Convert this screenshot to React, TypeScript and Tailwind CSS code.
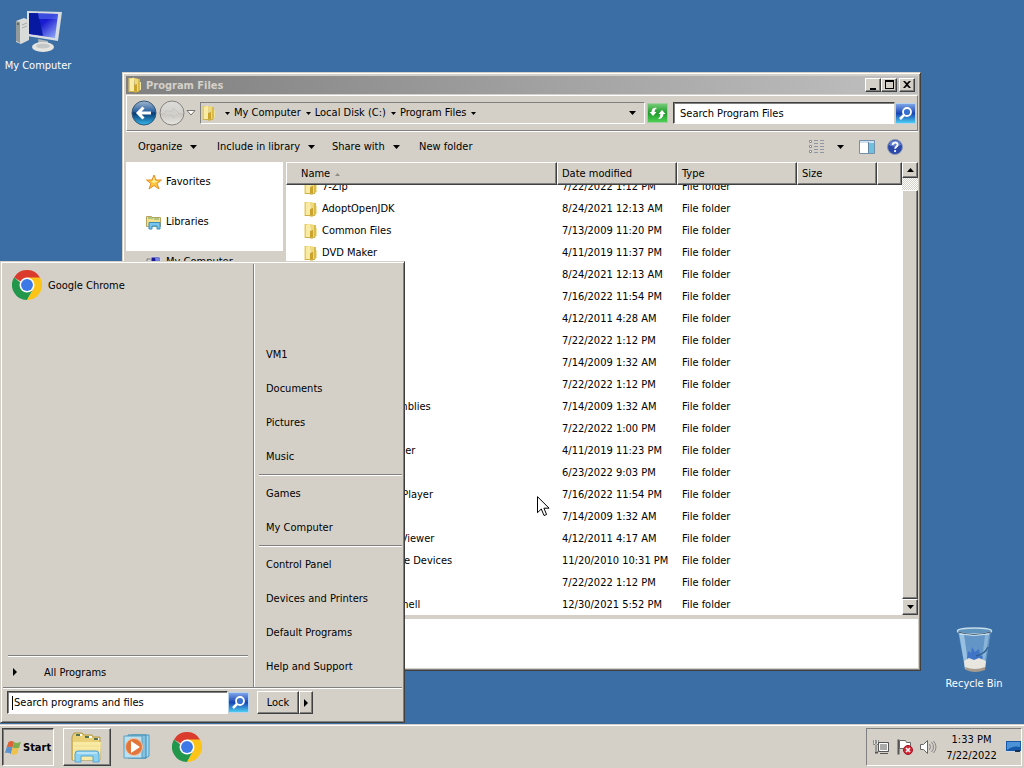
import { useEffect, useRef, useState } from "react";
import type { ReactNode } from "react";

type FileRow = { name: string; date: string };

const files: FileRow[] = [
  { name: "7-Zip", date: "7/22/2022 1:12 PM" },
  { name: "AdoptOpenJDK", date: "8/24/2021 12:13 AM" },
  { name: "Common Files", date: "7/13/2009 11:20 PM" },
  { name: "DVD Maker", date: "4/11/2019 11:37 PM" },
  { name: "Google", date: "8/24/2021 12:13 AM" },
  { name: "Intel", date: "7/16/2022 11:54 PM" },
  { name: "Java", date: "4/12/2011 4:28 AM" },
  { name: "Microsoft", date: "7/22/2022 1:12 PM" },
  { name: "MSBuild", date: "7/14/2009 1:32 AM" },
  { name: "Notepad++", date: "7/22/2022 1:12 PM" },
  { name: "Reference Assemblies", date: "7/14/2009 1:32 AM" },
  { name: "Tools", date: "7/22/2022 1:00 PM" },
  { name: "Windows Defender", date: "4/11/2019 11:23 PM" },
  { name: "Windows Mail", date: "6/23/2022 9:03 PM" },
  { name: "Windows Media Player", date: "7/16/2022 11:54 PM" },
  { name: "Windows NT", date: "7/14/2009 1:32 AM" },
  { name: "Windows Photo Viewer", date: "4/12/2011 4:17 AM" },
  { name: "Windows Portable Devices", date: "11/20/2010 10:31 PM" },
  { name: "WinRAR", date: "7/22/2022 1:12 PM" },
  { name: "WindowsPowerShell", date: "12/30/2021 5:52 PM" },
];

const menuGroups = [
  ["VM1", "Documents", "Pictures", "Music"],
  ["Games", "My Computer"],
  ["Control Panel", "Devices and Printers", "Default Programs", "Help and Support"],
];

const raised =
  "border border-t-white border-l-white border-r-[#404040] border-b-[#404040] bg-[#d4d0c8] shadow-[inset_-1px_-1px_0_#808080]";
const sunken = "border border-t-[#808080] border-l-[#808080] border-r-white border-b-white";

export default function App() {
  return (
    <div className="flex h-screen flex-col overflow-hidden bg-[#3a6ea5] font-['DejaVu_Sans_Condensed','DejaVu_Sans',sans-serif] text-[11px] leading-[14px] text-black select-none">
      <main className="relative min-h-0 flex-1">
        <DesktopIcon label="My Computer" className="top-2 left-0">
          <ComputerIcon />
        </DesktopIcon>
        <DesktopIcon label="Recycle Bin" className="right-3 bottom-[33px]">
          <BinIcon />
        </DesktopIcon>
        <ExplorerWindow />
        <StartMenu />
        <Cursor />
      </main>
      <Taskbar />
    </div>
  );
}

function DesktopIcon({ label, className, children }: { label: string; className: string; children: ReactNode }) {
  return (
    <button className={`absolute flex w-[76px] flex-col items-center gap-[3px] text-white ${className}`}>
      {children}
      <span className="whitespace-nowrap">{label}</span>
    </button>
  );
}

/* Explorer */

function ExplorerWindow() {
  return (
    <section className="absolute top-[72px] left-[122px] flex h-[599px] w-[799px] flex-col border border-t-[#d4d0c8] border-l-[#d4d0c8] border-r-[#404040] border-b-[#404040] bg-[#d4d0c8] pt-[3px] pr-[2px] pb-[2px] pl-[3px] shadow-[inset_1px_1px_0_#fff,inset_-1px_-1px_0_#808080]">
      <header className="flex h-[18px] shrink-0 items-center bg-linear-to-r from-[#808080] to-[#c0c0c0] pr-[3px] pl-px">
        <FolderIcon />
        <h1 className="ml-[3px] flex-1 pt-px font-bold text-[#d4d0c8]">Program Files</h1>
        <CaptionButton label="Minimize">
          <path d="M3 9h6v2H3z" />
        </CaptionButton>
        <CaptionButton label="Maximize">
          <path d="M2 1h9v9H2zM3 3v6h7V3z" fillRule="evenodd" />
        </CaptionButton>
        <span className="w-[2px]" />
        <CaptionButton label="Close">
          <path d="M2 2h2l2 2 2-2h2L7 5.500l3 3.500H8L6 7 4 9H2l3-3.500z" />
        </CaptionButton>
      </header>

      <AddressRow />

      <div className="flex h-[31px] shrink-0 items-center pr-[15px] pl-3">
        <button className="flex w-[79px] items-center gap-2">
          Organize <DownArrow />
        </button>
        <button className="flex w-[115px] items-center gap-2 whitespace-nowrap">
          Include in library <DownArrow />
        </button>
        <button className="flex w-[87px] items-center gap-2 whitespace-nowrap">
          Share with <DownArrow />
        </button>
        <button>New folder</button>
        <span className="flex-1" />
        <button aria-label="Change your view" className="flex items-center gap-3">
          <svg width="16" height="13" viewBox="0 0 16 13">
            <path d="M.5.500h2v2h-2zM.5 5.500h2v2h-2zM.5 10.500h2v2h-2z" fill="#fff" stroke="#8c8c8c" />
            <path d="M5 .5h4m2 0h4M5 3.500h4m2 0h4M5 6.500h4m2 0h4M5 9.500h4m2 0h4M5 12.500h4m2 0h4" stroke="#8f97a3" />
          </svg>
          <DownArrow />
        </button>
        <button aria-label="Show the preview pane" className="ml-[15px]">
          <svg width="16" height="14" viewBox="0 0 16 14">
            <path d="M.5.500h15v13H.5z" fill="#fff" stroke="#7590ad" />
            <path d="M1 1h14v2H1z" fill="#cfe0ef" />
            <path d="M10 3h5v10h-5z" fill="#6fc0dc" />
            <path d="M9.500 2v11" stroke="#6484a8" />
          </svg>
        </button>
        <button aria-label="Get help" className="ml-3">
          <svg width="16" height="16" viewBox="0 0 16 16">
            <circle cx="8" cy="8" r="7.500" fill="#2b48a8" stroke="#8b99b8" />
            <path d="M2 6a6.300 6.300 0 0 1 12 0q-6 3-12 0z" fill="#8fa8ea" opacity=".6" />
            <path d="M5.600 6c.1-3.300 5-3.200 5-.3 0 2-2.500 2-2.500 4" fill="none" stroke="#fff" strokeWidth="1.800" />
            <circle cx="8.100" cy="12.100" r="1.100" fill="#fff" />
          </svg>
        </button>
      </div>

      <div className="flex min-h-0 flex-1">
        <nav className="w-[157px] shrink-0 overflow-hidden bg-white">
          <a href="#favorites" className="flex h-10 items-center gap-1 pl-5">
            <StarIcon /> Favorites
          </a>
          <a href="#libraries" className="flex h-10 items-center gap-1 pl-5">
            <LibraryIcon /> Libraries
          </a>
          <a href="#computer" className="mt-[9px] flex h-[22px] items-center gap-1 bg-[#d4d0c8] pl-5">
            <MiniComputerIcon /> My Computer
          </a>
        </nav>
        <div className="ml-[3px] flex min-w-0 flex-1">
          <FileTable />
          <Scrollbar />
        </div>
      </div>

      <footer className="mt-1 h-[49px] shrink-0 bg-white" />
    </section>
  );
}

function CaptionButton({ label, children }: { label: string; children: ReactNode }) {
  return (
    <button aria-label={label} className={`flex h-[14px] w-4 items-center justify-center ${raised}`}>
      <svg width="12" height="12" viewBox="0 0 12 12" className="shrink-0">
        {children}
      </svg>
    </button>
  );
}

function AddressRow() {
  const [query, setQuery] = useState("");

  return (
    <div className="mt-px flex h-[36px] shrink-0 items-center border border-t-white border-l-white border-r-[#808080] border-b-[#808080] pr-px pl-1 shadow-[0_1px_0_#fff]">
      <button aria-label="Back">
        <svg width="26" height="26" viewBox="0 0 26 26">
          <defs>
            <linearGradient id="back" x2="0" y2="1">
              <stop offset="0" stopColor="#a3b8cf" />
              <stop offset=".45" stopColor="#28609e" />
              <stop offset=".5" stopColor="#073770" />
              <stop offset="1" stopColor="#35b8ee" />
            </linearGradient>
          </defs>
          <circle cx="13" cy="13" r="12" fill="url(#back)" stroke="#355777" />
          <path d="M7 13h13M12.500 7.500L7 13l5.500 5.500" fill="none" stroke="#fff" strokeWidth="3" />
        </svg>
      </button>
      <button aria-label="Forward" className="ml-[2px]">
        <svg width="26" height="26" viewBox="0 0 26 26">
          <defs>
            <linearGradient id="fwd" x2="0" y2="1">
              <stop offset="0" stopColor="#dedcd8" />
              <stop offset=".48" stopColor="#d4d2ce" />
              <stop offset=".5" stopColor="#c6c3be" />
              <stop offset="1" stopColor="#e9e7e2" />
            </linearGradient>
          </defs>
          <circle cx="13" cy="13" r="12" fill="url(#fwd)" stroke="#85837e" />
          <path d="M20 13l-6-5v3H6v4h8v3z" fill="#d2d0cb" stroke="#c5c3be" strokeWidth=".7" />
        </svg>
      </button>
      <button aria-label="Recent pages" className="ml-px">
        <svg width="10" height="6" viewBox="0 0 10 6">
          <path d="M1 .5h8L5 5z" fill="#fff" stroke="#77756f" />
        </svg>
      </button>
      <div className={`ml-1 flex h-[22px] min-w-0 flex-1 items-center gap-1 ${sunken}`}>
        <FolderIcon />
        <span className="ml-1">
          <DownArrow small />
        </span>
        <Crumb label="My Computer" />
        <Crumb label="Local Disk (C:)" />
        <Crumb label="Program Files" />
        <span className="flex-1" />
        <button aria-label="Previous locations" className="pr-2">
          <DownArrow />
        </button>
      </div>
      <button aria-label="Refresh" className="ml-[2px]">
        <svg width="21" height="20" viewBox="0 0 21 20">
          <defs>
            <linearGradient id="refresh" x2="0" y2="1">
              <stop offset="0" stopColor="#79ce7a" />
              <stop offset=".5" stopColor="#1f9a2b" />
              <stop offset="1" stopColor="#4fd255" />
            </linearGradient>
          </defs>
          <path d="M.5.500h20v19H.5z" fill="url(#refresh)" stroke="#9fd0a0" />
          <path d="M2.500 9L6 13l3.500-4H7.500q0-3 2.500-4Q5 4 4.500 9z" fill="#fff" />
          <path d="M18.500 11L15 7l-3.500 4h2q0 3-2.500 5 5 0 5.500-5z" fill="#fff" />
        </svg>
      </button>
      <input
        type="search"
        aria-label="Search Program Files"
        placeholder="Search Program Files"
        value={query}
        onChange={(e) => setQuery(e.target.value)}
        className="ml-[5px] h-[22px] w-[222px] border border-t-[#404040] border-l-[#404040] border-r-[#d4d0c8] border-b-white bg-white pl-[6px] shadow-[inset_1px_1px_0_#808080] outline-none placeholder:text-black"
      />
      <button aria-label="Search">
        <SearchIcon />
      </button>
    </div>
  );
}

function Crumb({ label }: { label: string }) {
  return (
    <button className="flex shrink-0 items-center gap-[5px] whitespace-nowrap">
      {label}
      <DownArrow small />
    </button>
  );
}

function DownArrow({ small }: { small?: boolean }) {
  return (
    <svg width={small ? 5 : 7} height={small ? 3 : 4} viewBox="0 0 8 4" preserveAspectRatio="none" className="shrink-0">
      <path d="M0 0h8L4 4z" />
    </svg>
  );
}

function FileTable() {
  const box = useRef<HTMLDivElement>(null);

  useEffect(() => {
    if (box.current) box.current.scrollTop = 9;
  }, []);

  const th =
    "h-[23px] border border-t-white border-l-white border-r-[#404040] border-b-[#404040] bg-[#d4d0c8] pt-px pl-1 text-left font-normal shadow-[inset_-1px_-1px_0_#808080]";

  return (
    <div ref={box} className="min-w-0 flex-1 overflow-hidden bg-white">
      <table className="w-full table-fixed border-separate border-spacing-0">
        <thead className="sticky top-0 z-10">
          <tr>
            <th className={th}>
              <span className="ml-[10px] flex items-center gap-[5px]">
                Name
                <svg width="5" height="3" viewBox="0 0 5 3">
                  <path d="M0 3h5L2.500 0z" fill="#8f8c86" />
                </svg>
              </span>
            </th>
            <th className={`w-[120px] ${th}`}>Date modified</th>
            <th className={`w-[120px] ${th}`}>Type</th>
            <th className={`w-[80px] ${th}`}>Size</th>
            <th className={`w-[25px] ${th}`} />
          </tr>
        </thead>
        <tbody>
          {files.map((f) => (
            <tr key={f.name} className="h-[22px]">
              <td className="p-0">
                <span className="flex items-center gap-[3px] pl-[17px] whitespace-nowrap">
                  <FolderIcon />
                  {f.name}
                </span>
              </td>
              <td className="p-0 pl-[5px] whitespace-nowrap">{f.date}</td>
              <td className="p-0 pl-[5px]">File folder</td>
              <td />
              <td />
            </tr>
          ))}
        </tbody>
      </table>
    </div>
  );
}

function Scrollbar() {
  return (
    <div className="flex w-4 shrink-0 flex-col bg-[#e9e7e3]">
      <button aria-label="Scroll up" className={`flex h-4 items-center justify-center ${raised}`}>
        <svg width="7" height="4" viewBox="0 0 7 4">
          <path d="M0 4h7L3.500 0z" />
        </svg>
      </button>
      <div className="h-3 bg-[conic-gradient(#d4d0c8_25%,#fff_0_50%,#d4d0c8_0_75%,#fff_0)] bg-size-[2px_2px]" />
      <div className={`flex-1 ${raised}`} />
      <button aria-label="Scroll down" className={`flex h-4 items-center justify-center ${raised}`}>
        <DownArrow />
      </button>
    </div>
  );
}

/* Start menu */

function StartMenu() {
  const [query, setQuery] = useState("");

  return (
    <aside className="absolute bottom-px left-0 flex h-[462px] w-[405px] flex-col border border-t-[#d4d0c8] border-l-[#d4d0c8] border-r-[#404040] border-b-[#404040] bg-[#d4d0c8] p-[2px] shadow-[inset_1px_1px_0_#fff,inset_-1px_-1px_0_#808080]">
      <div className="flex min-h-0 flex-1 border-b border-[#808080]">
        <div className="flex w-[251px] flex-col border-r border-[#808080] px-[5px]">
          <button className="mt-1 flex h-[34px] items-center gap-[6px] pl-1">
            <ChromeIcon />
            <span className="pt-px">Google Chrome</span>
          </button>
          <span className="flex-1" />
          <hr className="border-t border-b border-t-[#808080] border-b-white" />
          <button className="flex h-[30px] items-center gap-[27px] pl-[5px]">
            <RightArrow /> <span className="pt-px">All Programs</span>
          </button>
        </div>
        <div className="flex flex-1 flex-col justify-end border-l border-white pb-[3px] pl-1">
          {menuGroups.map((group, i) => (
            <div key={i}>
              {i > 0 && <hr className="mb-px border-t border-b border-t-[#808080] border-b-white" />}
              {group.map((item) => (
                <button key={item} className="flex h-[34px] w-full items-center pl-[7px]">
                  {item}
                </button>
              ))}
            </div>
          ))}
        </div>
      </div>
      <div className="flex h-8 shrink-0 items-start border-t border-white pt-[2px] pl-1">
        <label className="flex h-[23px] w-[221px] items-center border border-t-[#404040] border-l-[#404040] border-r-white border-b-white bg-white pt-px pl-1 shadow-[inset_1px_1px_0_#808080]">
          <span className="h-[14px] w-px bg-black" />
          <input
            aria-label="Search programs and files"
            placeholder="Search programs and files"
            value={query}
            onChange={(e) => setQuery(e.target.value)}
            className="ml-px min-w-0 flex-1 outline-none placeholder:text-black"
          />
        </label>
        <button aria-label="Search" className="pt-px">
          <SearchIcon />
        </button>
        <button className={`ml-2 h-[23px] w-[42px] ${raised}`}>Lock</button>
        <button aria-label="Shut down options" className={`flex h-[23px] w-[14px] items-center justify-center ${raised}`}>
          <RightArrow />
        </button>
      </div>
    </aside>
  );
}

function RightArrow() {
  return (
    <svg width="4" height="8" viewBox="0 0 4 8" className="shrink-0">
      <path d="M0 0v8l4-4z" />
    </svg>
  );
}

/* Taskbar */

function Taskbar() {
  return (
    <footer className="flex h-[44px] shrink-0 items-center border-t border-[#d4d0c8] bg-[#d4d0c8] px-[2px] pt-px shadow-[inset_0_1px_0_#fff]">
      <button className="flex h-[38px] w-[52px] items-center gap-px border border-t-[#404040] border-l-[#404040] border-r-white border-b-white pt-px pl-[2px] font-bold shadow-[inset_1px_1px_0_#808080]">
        <WindowsFlag />
        Start
      </button>
      <button aria-label="Windows Explorer" className={`ml-[9px] flex h-[38px] w-[48px] items-center justify-center ${raised}`}>
        <ExplorerIcon />
      </button>
      <button aria-label="Windows Media Player" className="ml-3 flex w-7 justify-center">
        <MediaIcon />
      </button>
      <button aria-label="Google Chrome" className="ml-[21px]">
        <ChromeIcon />
      </button>
      <span className="flex-1" />
      <div className={`flex h-[38px] w-[156px] items-center pl-[6px] ${sunken}`}>
        <button aria-label="Network">
          <NetworkIcon />
        </button>
        <button aria-label="Action Center" className="ml-2">
          <FlagIcon />
        </button>
        <button aria-label="Volume" className="ml-[7px]">
          <VolumeIcon />
        </button>
        <time className="w-[74px] pt-px text-center leading-4">
          1:33 PM
          <br />
          7/22/2022
        </time>
        <button aria-label="Show desktop">
          <svg width="15" height="14" viewBox="0 0 15 14">
            <path d="M0 1h15v11H0z" fill="#1559a8" />
            <path d="M1 2h13v5Q7 5 1 10z" fill="#4b93d6" />
            <path d="M0 11h15v1H0z" fill="#cfdbe8" />
            <path d="M9 10h5v2H9z" fill="#173252" />
          </svg>
        </button>
      </div>
    </footer>
  );
}

/* Icons */

function FolderIcon() {
  return (
    <svg width="16" height="16" viewBox="0 0 16 16" className="shrink-0">
      <path d="M1.500 1H7v13l-5.500 1z" fill="#e6cc60" />
      <path d="M7 1l5 1v12l-4 1z" fill="#efd977" />
      <path d="M3 2l4-1.500V15l-4-1z" fill="#f9eba4" />
      <path d="M7 8l3-1v8.500H7z" fill="#c9a32c" />
      <path d="M11 2h2v11.500l-2 .5z" fill="#d9ba4c" />
      <path d="M13.500 5v8" stroke="#f0e4a2" />
      <path d="M2 14.500h10" stroke="#cdb04a" />
    </svg>
  );
}

function SearchIcon() {
  return (
    <svg width="21" height="21" viewBox="0 0 21 21">
      <defs>
        <linearGradient id="glass" x2="0" y2="1">
          <stop offset="0" stopColor="#83a8ea" />
          <stop offset=".5" stopColor="#1745b5" />
          <stop offset="1" stopColor="#4ed4f2" />
        </linearGradient>
      </defs>
      <rect x=".5" y=".5" width="20" height="20" rx="1" fill="url(#glass)" stroke="#b5d3ee" />
      <circle cx="12" cy="9" r="4" fill="#3971d0" stroke="#fff" strokeWidth="1.800" />
      <path d="M9 12l-4 4" stroke="#fff" strokeWidth="2.500" />
    </svg>
  );
}

function StarIcon() {
  return (
    <svg width="16" height="16" viewBox="0 0 16 16">
      <path d="M8 1l2 5h5.500L11 9.500l2 5.500-5-3.500L3 15l2-5.500L.5 6H6z" fill="#fcc63e" stroke="#e58d25" />
      <path d="M8 3l1 4 3 .5-4 1.500-3-1.500L7 7z" fill="#fff2a0" />
    </svg>
  );
}

function LibraryIcon() {
  return (
    <svg width="16" height="16" viewBox="0 0 16 16">
      <path d="M.5 2.500h5l1 1h8v9H.5z" fill="#f3df8c" stroke="#b9a45c" />
      <path d="M2 4h5m1 1h5" stroke="#6ea66f" />
      <path d="M3 15V8.500h11V15h-3v-3H6v3z" fill="#79c5ec" stroke="#348fc0" />
    </svg>
  );
}

function MiniComputerIcon() {
  return (
    <svg width="16" height="16" viewBox="0 0 16 16">
      <path d="M1 5h4v8H1z" fill="#dedede" stroke="#777" />
      <path d="M5 3h9v8H5z" fill="#181898" stroke="#d8d8e8" />
      <path d="M9 4h4v6h-3z" fill="#7483e0" />
      <path d="M6 14q3-3 7 0z" fill="#999" />
    </svg>
  );
}

function ComputerIcon() {
  return (
    <svg width="48" height="48" viewBox="0 0 48 48">
      <defs>
        <linearGradient id="screen" x2="1" y2="1">
          <stop offset="0" stopColor="#1524d0" />
          <stop offset=".45" stopColor="#1a1ad0" />
          <stop offset="1" stopColor="#9bb7fb" />
        </linearGradient>
      </defs>
      <path d="M2 13l8-3 5 2v20l-8 4-5-2z" fill="#d9dbd8" />
      <path d="M2 13l4 1v21l-4-2z" fill="#94999b" />
      <path d="M8 17l5-2M8 20l5-2" stroke="#aaa" />
      <circle cx="4" cy="16" r="1" fill="#49604a" />
      <path d="M24 31l10 2-1 7h-8z" fill="#aeb5b9" />
      <ellipse cx="29" cy="39" rx="11" ry="5" fill="#e6e5e0" />
      <ellipse cx="29" cy="38" rx="7" ry="2.500" fill="#c4c7c7" />
      <path d="M13 3l35 1-4 29-31-5z" fill="#d7dce0" />
      <path d="M15 5l29 1-3 24-26-4z" fill="url(#screen)" />
      <path d="M15 5l9 .3 5 22.500-14-2z" fill="#0719a0" />
      <path d="M24 5.300l20 .7-1 5-18 0z" fill="#5d79ed" opacity=".5" />
    </svg>
  );
}

function BinIcon() {
  return (
    <svg width="48" height="48" viewBox="0 0 48 48">
      <path d="M8 5h33l-6 38q-10 5-20 0z" fill="#7fb0dc" opacity=".6" />
      <path d="M9 7l6 35q2 2 4 2L14 8z" fill="#bcdcf2" opacity=".6" />
      <path d="M35 9l4-1-5 34-3 1z" fill="#c3e0f3" opacity=".4" />
      <path d="M17 32l1-7 3 2 1-6 3 5 4-3 1 6 3 2-2 5H18z" fill="#2c62c8" opacity=".65" />
      <path d="M14 35l5-3 5 2 5-2 7 3-1 8q-10 4-20 0z" fill="#e8e6df" />
      <path d="M15 41q10 4 20 0v3q-10 4-19 0z" fill="#a69b8e" />
      <path d="M38 21q-3 7-12 9" fill="none" stroke="#30618f" strokeWidth="1.500" />
      <ellipse cx="24.500" cy="5" rx="17" ry="3" fill="#5e93bd" stroke="#c4dbe8" strokeWidth="1.500" />
      <path d="M8 6q16 5 33 0" fill="none" stroke="#39566f" />
      <path d="M10 8q14 3 29 0" fill="none" stroke="#d4e6ef" />
    </svg>
  );
}

function ChromeIcon() {
  return (
    <svg width="30" height="30" viewBox="0 0 48 48" className="shrink-0">
      <path d="M24 24L3.200 12A24 24 0 0 1 44.800 12z" fill="#db3b2c" />
      <path d="M24 24h-6L3.200 12A24 24 0 0 0 24 48l10-18z" fill="#22964a" />
      <path d="M24 12h20.800A24 24 0 0 1 24 48l10.400-18z" fill="#fbc417" />
      <circle cx="24" cy="24" r="12" fill="#fff" />
      <circle cx="24" cy="24" r="9.500" fill="#3c78e6" />
    </svg>
  );
}

function WindowsFlag() {
  return (
    <svg width="17" height="16" viewBox="0 0 17 16" className="shrink-0">
      <path d="M3.500 2q3-2 5.500 0L7.500 7.500Q5 6 1.500 7.500z" fill="#dd6238" />
      <path d="M9 2q3.500 2 7-.5l-2 6.500q-3.500 1-6.500-.5z" fill="#7fae4c" />
      <path d="M1.500 7.500q3-1.500 6 0L6 14Q3 12 0 13z" fill="#5b92cc" />
      <path d="M7.500 7.500q3.500 1.500 6.500.5l-2 6q-3 1.500-6 0z" fill="#efc24c" />
    </svg>
  );
}

function ExplorerIcon() {
  return (
    <svg width="32" height="32" viewBox="0 0 32 32">
      <path d="M3 2h8l2 2h8l1 2h7v23H1V6z" fill="#e9cf75" stroke="#b49a45" />
      <path d="M5 4h4M14 6h4M23 8h4" stroke="#55734f" strokeWidth="2" />
      <path d="M9 4h2M18 6h3M27 8h1" stroke="#fff" strokeWidth="2" />
      <path d="M2 11h28l-1 18H2z" fill="#f8e9a3" />
      <path d="M3 15h25M3 19h25" stroke="#eedb8b" />
      <path d="M4 31V23q0-3 3-3h18q3 0 3 3v8h-6v-6H10v6z" fill="#8bd1f2" stroke="#5aa5cf" />
      <path d="M6 22h20" stroke="#e0f5fd" />
    </svg>
  );
}

function MediaIcon() {
  return (
    <svg width="28" height="28" viewBox="0 0 28 28">
      <path d="M8 2h18v21l-3 2H8z" fill="#a9d8ed" stroke="#4a9ac0" />
      <path d="M5 2h18v23H5z" fill="#84c2e0" stroke="#3b8ab5" />
      <path d="M1 3h18v22H1z" fill="#b9e1f1" stroke="#5c9fbe" />
      <circle cx="11" cy="14" r="8.500" fill="#e2763a" stroke="#f7c29f" />
      <path d="M8 8l9 6-9 6z" fill="#fff" />
    </svg>
  );
}

function NetworkIcon() {
  return (
    <svg width="16" height="16" viewBox="0 0 16 16">
      <path d="M5.500 3.500h10v9h-10z" fill="#aaa" stroke="#555" />
      <path d="M6.500 4.500h8v7h-8z" fill="none" stroke="#fff" />
      <path d="M7 14.500h8" stroke="#555" />
      <path d="M1.500 1v4h3V1M3 5v8.500h2" fill="none" stroke="#555" strokeWidth="2" />
      <path d="M1.500 1v4h3V1M3 5v8" fill="none" stroke="#fff" strokeWidth=".8" />
    </svg>
  );
}

function FlagIcon() {
  return (
    <svg width="16" height="16" viewBox="0 0 16 16">
      <path d="M1.500.500v15" stroke="#555" strokeWidth="2" />
      <path d="M2.500 1.500h6l1 2h4v7h-6l-1-1h-4z" fill="#fff" stroke="#666" />
      <circle cx="11" cy="11" r="4.500" fill="#d42736" stroke="#9b1626" />
      <path d="M9 9l4 4m0-4l-4 4" stroke="#fff" strokeWidth="1.500" />
    </svg>
  );
}

function VolumeIcon() {
  return (
    <svg width="17" height="16" viewBox="0 0 17 16">
      <path d="M.5 5.500h3l4-4v13l-4-4h-3z" fill="#fff" stroke="#666" />
      <path d="M9.500 5q2 3 0 6M11.500 3q4 5 0 10M13.500 2q5 6 0 12" fill="none" stroke="#888" />
    </svg>
  );
}

function Cursor() {
  return (
    <svg width="13" height="21" viewBox="0 0 13 21" className="absolute top-[496px] left-[537px]">
      <path d="M.5.700v16l3.800-3.700 2.700 6.500 2.600-1-2.700-6.300h5.200z" fill="#fff" stroke="#000" />
    </svg>
  );
}
